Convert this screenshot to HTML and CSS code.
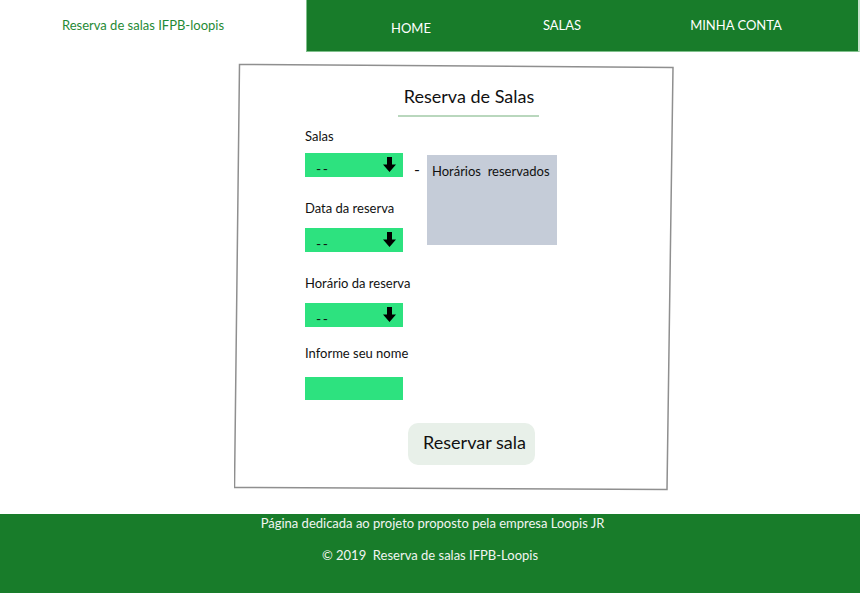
FILE: index.html
```html
<!DOCTYPE html>
<html lang="pt-BR">
<head>
<meta charset="utf-8">
<title>Reserva de salas IFPB-loopis</title>
<link rel="stylesheet" href="styles.css">
</head>
<body>
<header class="topbar">
  <div class="brand">Reserva de salas IFPB-loopis</div>
  <nav class="nav">
    <a class="nav-item nav-home" href="#">HOME</a>
    <a class="nav-item nav-salas" href="#">SALAS</a>
    <a class="nav-item nav-conta" href="#">MINHA CONTA</a>
  </nav>
</header>

<main class="main">
  <section class="card">
    <svg class="card-frame" viewBox="0 0 440 428" width="440" height="428" aria-hidden="true">
      <polygon points="5.5,1.5 439,4.5 433,426.5 0.5,424.5" fill="none" stroke="#8f8f8f" stroke-width="1.5"/>
    </svg>
    <div class="card-inner">
      <h1 class="title">Reserva de Salas</h1>
      <div class="title-rule"></div>
      <div class="form-row">
        <div class="fields">
          <label class="label label-first">Salas</label>
          <div class="select">
            <span class="select-value">--</span>
            <svg class="arrow" viewBox="0 0 13 15" width="13" height="15"><path d="M4 0h5v7.5h4l-6.5 7.5-6.5-7.5h4z" fill="#000"/></svg>
          </div>
          <label class="label">Data da reserva</label>
          <div class="select">
            <span class="select-value">--</span>
            <svg class="arrow" viewBox="0 0 13 15" width="13" height="15"><path d="M4 0h5v7.5h4l-6.5 7.5-6.5-7.5h4z" fill="#000"/></svg>
          </div>
          <label class="label">Horário da reserva</label>
          <div class="select select-last">
            <span class="select-value">--</span>
            <svg class="arrow" viewBox="0 0 13 15" width="13" height="15"><path d="M4 0h5v7.5h4l-6.5 7.5-6.5-7.5h4z" fill="#000"/></svg>
          </div>
          <label class="label label-name">Informe seu nome</label>
          <div class="input"></div>
        </div>
        <span class="dash">-</span>
        <div class="booked">Horários&nbsp; reservados</div>
      </div>
      <button class="btn">Reservar sala</button>
    </div>
  </section>
</main>

<footer class="footer">
  <p class="foot-line">Página dedicada ao projeto proposto pela empresa Loopis JR</p>
  <p class="foot-line foot-copy">© 2019&nbsp; Reserva de salas IFPB-Loopis</p>
</footer>
</body>
</html>
```

FILE: styles.css
```css
* { box-sizing: border-box; }

html, body {
  margin: 0;
  padding: 0;
  background: #fff;
  font-family: Lato, "Open Sans", "Liberation Sans", sans-serif;
  color: #111;
}

.topbar {
  display: flex;
  height: 52px;
}

.brand {
  width: 306px;
  display: flex;
  align-items: center;
  justify-content: center;
  font-size: 13px;
  color: #1f8a35;
  padding: 0 20px 2px 0;
}

.nav {
  flex: 1;
  display: flex;
  align-items: flex-start;
  background: #187c2a;
  border-left: 1px solid #7fc08b;
  border-right: 2px solid #c9e3cd;
  border-bottom: 1px solid #7fc08b;
  padding-left: 84px;
}

.nav-item {
  color: #fff;
  text-decoration: none;
  font-size: 13px;
  line-height: 16px;
  padding-top: 17px;
}

.nav-home { padding-top: 20px; }
.nav-salas { margin-left: 112px; }
.nav-conta { margin-left: 109px; }

.main {
  padding: 11px 0 23px 234px;
}

.card {
  position: relative;
  width: 440px;
  height: 428px;
}

.card-frame {
  position: absolute;
  left: 0;
  top: 0;
  pointer-events: none;
}

.card-inner {
  padding: 22px 0 0 71px;
  width: 399px;
}

.title {
  margin: 0;
  font-weight: 400;
  font-size: 18px;
  line-height: 22px;
  text-align: center;
  color: #111;
}

.title-rule {
  width: 141px;
  height: 2px;
  background: #b9d7bd;
  margin: 8px 0 0 93px;
}

.form-row {
  display: flex;
  align-items: flex-start;
  margin-top: 11px;
}

.fields {
  width: 98px;
  display: flex;
  flex-direction: column;
}

.label {
  font-size: 13px;
  line-height: 16px;
  white-space: nowrap;
  margin-bottom: 12px;
}

.label-first { margin-bottom: 9px; }
.label-name { margin-bottom: 16px; }

.select {
  height: 24px;
  background: #2de27f;
  display: flex;
  align-items: center;
  justify-content: space-between;
  padding: 0 7px 0 11px;
  margin-bottom: 23px;
}

.select-last { margin-bottom: 18px; }

.select-value {
  font-size: 14px;
  line-height: 16px;
  padding-top: 7px;
  letter-spacing: 1.5px;
}

.arrow {
  display: block;
  margin-top: -2px;
}

.input {
  height: 23px;
  background: #2de27f;
}

.dash {
  font-size: 16px;
  line-height: 16px;
  margin: 33px 0 0 11px;
}

.booked {
  width: 130px;
  height: 90px;
  background: #c5ccd8;
  margin: 27px 0 0 7px;
  font-size: 13px;
  line-height: 16px;
  padding: 8px 0 0 5px;
  white-space: nowrap;
}

.btn {
  display: block;
  margin: 23px 0 0 103px;
  width: 127px;
  height: 42px;
  border: none;
  border-radius: 10px;
  background: #e8f0e9;
  font-family: Lato, "Open Sans", "Liberation Sans", sans-serif;
  font-size: 18px;
  color: #111;
  padding: 0 0 4px 6px;
}

.footer {
  background: #187c2a;
  height: 80px;
  padding-top: 1px;
  text-align: center;
  color: #f1f5f1;
}

.foot-line {
  margin: 0;
  font-size: 13px;
  line-height: 16px;
  padding-left: 5px;
}

.foot-copy {
  margin-top: 16px;
  padding-left: 0;
}
```
